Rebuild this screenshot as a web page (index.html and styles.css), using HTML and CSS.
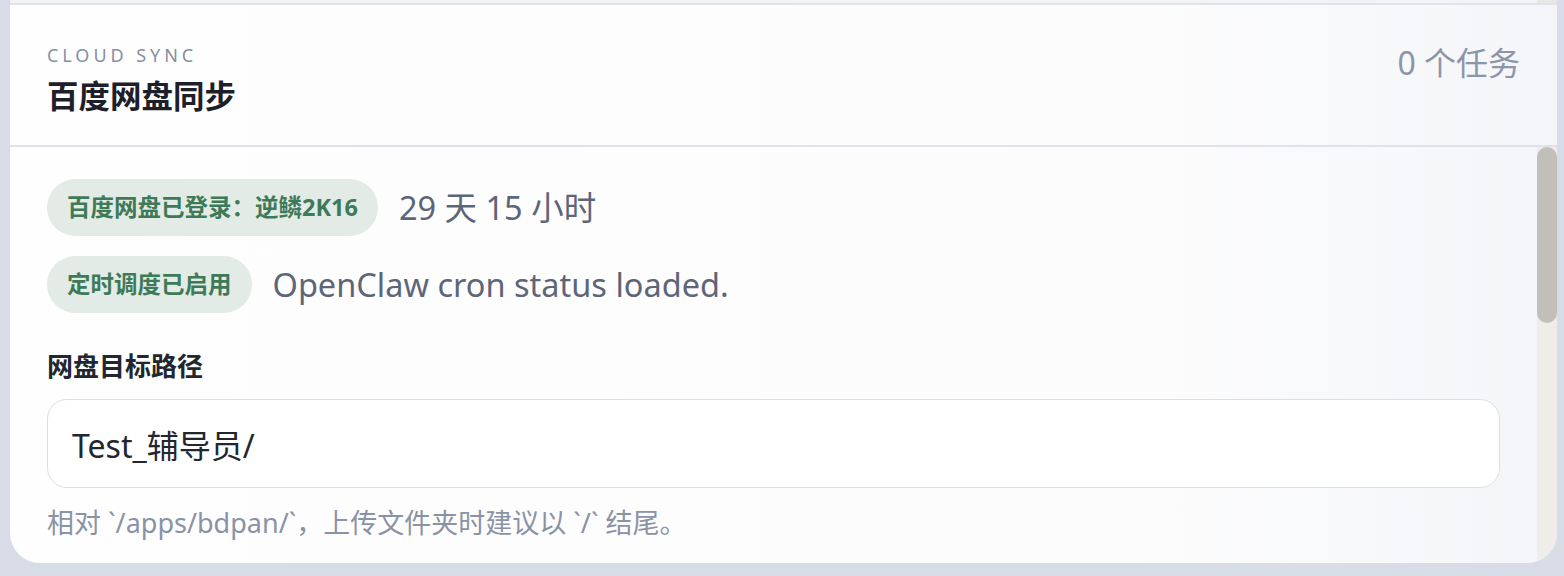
FILE: index.html
```html
<!DOCTYPE html>
<html lang="zh-CN">
<head>
    <meta charset="UTF-8">
    <meta name="viewport" content="width=device-width, initial-scale=1.0">
    <title>百度网盘同步</title>
    <link rel="stylesheet" href="styles.css">
</head>
<body>
    <section class="panel">
        <div class="panel-prev"></div>
        <header class="panel-head">
            <div>
                <div class="eyebrow">Cloud Sync</div>
                <h2 class="panel-title">百度网盘同步</h2>
            </div>
            <div class="task-count">0 个任务</div>
        </header>
        <div class="panel-main">
            <div class="panel-body">
                <div class="status-row">
                    <span class="pill">百度网盘已登录：逆鳞2K16</span>
                    <span class="status-text">29 天 15 小时</span>
                </div>
                <div class="status-row">
                    <span class="pill">定时调度已启用</span>
                    <span class="status-text">OpenClaw cron status loaded.</span>
                </div>

                <div class="field">
                    <label class="field-label" for="target">网盘目标路径</label>
                    <input class="field-input" id="target" type="text" value="Test_辅导员/">
                    <p class="field-hint">相对 `/apps/bdpan/`，上传文件夹时建议以 `/` 结尾。</p>
                </div>
            </div>
            <div class="scrollbar">
                <div class="scrollbar-thumb"></div>
            </div>
        </div>
    </section>
</body>
</html>
```

FILE: styles.css
```css
html, body {
    height: 100%;
}
body {
    margin: 0;
    padding: 0 7px 13px 10px;
    box-sizing: border-box;
    display: flex;
    flex-direction: column;
    background: #d7dce7;
    font-family: 'Noto Sans', 'Noto Sans CJK SC', sans-serif;
    color: #22262f;
}
.panel {
    flex: 1;
    min-height: 0;
    display: flex;
    flex-direction: column;
    background: linear-gradient(90deg, #fefefe 0%, #fcfcfd 75%, #f3f5f8 100%);
    border-radius: 0 0 30px 30px;
    overflow: hidden;
}
.panel-prev {
    height: 3px;
    border-bottom: 2px solid #e0e3ea;
    background: linear-gradient(90deg, #f2f3f7 calc(100% - 20px), #e8e7e3 calc(100% - 20px));
}
.panel-head {
    display: flex;
    justify-content: space-between;
    align-items: flex-start;
    padding: 39px 37px 29px;
    border-bottom: 2px solid #e0e2ea;
}
.eyebrow {
    font-size: 18px;
    line-height: 22px;
    letter-spacing: 0.22em;
    text-transform: uppercase;
    color: #868fa2;
}
.panel-title {
    margin: 10px 0 0;
    font-size: 31.5px;
    line-height: 40px;
    font-weight: 700;
    color: #1d2029;
}
.task-count {
    margin-top: -1px;
    font-size: 32px;
    line-height: 40px;
    color: #8c95a7;
}
.panel-main {
    flex: 1;
    min-height: 0;
    display: flex;
}
.panel-body {
    flex: 1;
    min-width: 0;
    overflow: hidden;
    padding: 32px 37px 0;
}
.scrollbar {
    width: 20px;
    background: #eeede9;
}
.scrollbar-thumb {
    height: 176px;
    border-radius: 10px;
    background: #c2beb9;
}
.status-row {
    display: flex;
    align-items: center;
    gap: 21px;
    margin-bottom: 20px;
}
.pill {
    display: inline-block;
    padding: 13px 20px;
    border-radius: 999px;
    background: #e2ebe6;
    color: #3f7a58;
    font-size: 23.5px;
    line-height: 31px;
    font-weight: 700;
}
.status-text {
    font-size: 32.5px;
    line-height: 42px;
    color: #5d6679;
}
.field {
    margin-top: 37px;
}
.field-label {
    display: block;
    font-size: 26px;
    line-height: 32px;
    font-weight: 700;
    color: #22262f;
}
.field-input {
    display: block;
    width: 100%;
    box-sizing: border-box;
    height: 89px;
    margin-top: 17px;
    padding: 0 24px;
    border: 1.5px solid #dcdfe7;
    border-radius: 20px;
    background: #fff;
    font-family: inherit;
    font-size: 32px;
    color: #22262f;
}
.field-hint {
    margin: 18px 0 0;
    font-size: 27px;
    line-height: 34px;
    color: #8a93a5;
}
```
